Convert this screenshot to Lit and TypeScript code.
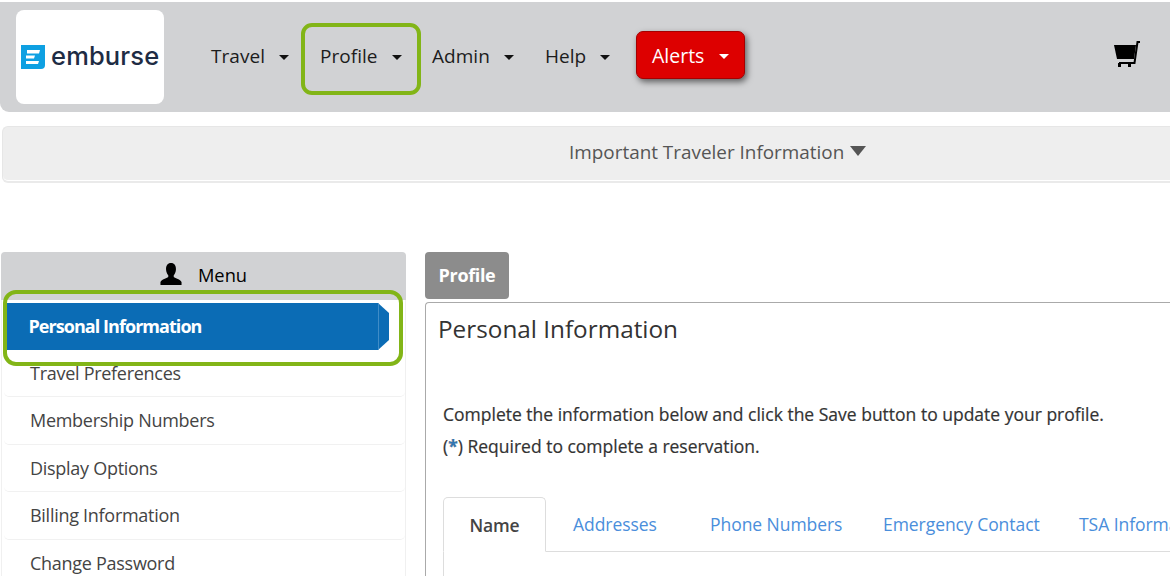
import { LitElement, html, css } from "lit";
import { customElement } from "lit/decorators.js";

const nav = [
  { label: "Travel", cls: "travel" },
  { label: "Profile", cls: "profile" },
  { label: "Admin", cls: "admin" },
  { label: "Help", cls: "help" },
];
const menu = ["Travel Preferences", "Membership Numbers", "Display Options", "Billing Information", "Change Password"];
const tabs = [
  { label: "Addresses", w: 137 },
  { label: "Phone Numbers", w: 173 },
  { label: "Emergency Contact", w: 196 },
  { label: "TSA Information", w: 200 },
];

@customElement("app-root")
export class AppRoot extends LitElement {
  static styles = css`
    :host {
      display: block;
      position: relative;
      width: 1170px;
      height: 576px;
      overflow: hidden;
      background: #fff;
      font-family: "Open Sans", "Noto Sans", sans-serif;
      color: #333;
    }
    .header {
      margin-top: 2px;
      height: 110px;
      box-sizing: border-box;
      background: #d1d2d4;
      border-bottom-left-radius: 9px;
      display: flex;
      align-items: flex-start;
      padding: 8px 30px 0 16px;
    }
    .logo {
      width: 148px;
      height: 94px;
      flex: none;
      background: #fff;
      border-radius: 8px;
      box-sizing: border-box;
      padding-left: 5px;
      display: flex;
      align-items: center;
      gap: 6px;
    }
    .logo svg { display: block; flex: none; margin-top: -1px; }
    .wordmark {
      font-family: "Inter", "Open Sans", sans-serif;
      font-size: 25.5px;
      font-weight: 500;
      letter-spacing: 0.15px;
      color: #1e2c44;
      margin-top: -3px;
    }
    .nav { display: flex; margin-left: 47px; align-items: flex-start; }
    .nav-item {
      height: 72px;
      margin-top: 13px;
      box-sizing: border-box;
      display: flex;
      align-items: center;
      padding: 0 9px 7px 16px;
      font-size: 19px;
      letter-spacing: 0.04px;
      color: #1c1c1c;
      border: 3px solid transparent;
      border-radius: 11px;
    }
    .nav-item.travel { margin-left: -22px; width: 112px; padding-left: 19px; }
    .nav-item.profile { border: 4px solid #82b517; width: 120px; padding-left: 15px; padding-bottom: 6px; }
    .nav-item.admin { width: 112px; margin-left: -8px; }
    .nav-item.help { width: 100px; margin-left: 1px; }
    .caret {
      flex: none;
      width: 0;
      height: 0;
      margin-left: 14px;
      margin-top: 3px;
      border-left: 5.5px solid transparent;
      border-right: 5.5px solid transparent;
      border-top: 5px solid #111;
    }
    .alerts {
      margin-top: 21px;
      margin-left: 10px;
      width: 109px;
      height: 48px;
      box-sizing: border-box;
      padding: 0 0 0 15px;
      display: flex;
      align-items: center;
      color: #fff;
      font-size: 19.5px;
      background: #dd0000;
      border: 1px solid #a50000;
      border-radius: 7px;
      box-shadow: 2px 3px 6px rgba(0, 0, 0, 0.55);
    }
    .alerts .caret { border-top-color: #fff; margin-left: 15px; }
    .cart { margin-left: auto; margin-top: 31px; flex: none; display: block; }
    .info {
      margin: 14px 0 0 2px;
      height: 57px;
      box-sizing: border-box;
      background: #eeeeee;
      border: 1px solid #e6e6e6;
      border-right: none;
      border-bottom: 2px solid #eaeaea;
      box-shadow: inset 0 -1px 0 #fff;
      border-radius: 6px 0 0 6px;
      display: flex;
      align-items: center;
      padding: 0 0 4px 566px;
      font-size: 18.9px;
      color: #555;
    }
    .info i {
      width: 0;
      height: 0;
      margin: -3px 0 0 6px;
      border-left: 8.5px solid transparent;
      border-right: 8.5px solid transparent;
      border-top: 10px solid #555;
    }
    .main { display: flex; margin-top: 69px; padding-left: 1px; align-items: flex-start; }
    .sidebar { width: 405px; flex: none; }
    .side-head {
      height: 48px;
      box-sizing: border-box;
      background: #d1d2d4;
      border-radius: 4px 4px 0 0;
      display: flex;
      align-items: center;
      justify-content: center;
      gap: 16px;
      padding-bottom: 4px;
      font-size: 18.3px;
      color: #000;
    }
    .side-head svg { margin-bottom: 1px; }
    .side-body {
      border-left: 1px solid #f0f0f0;
      border-right: 1px solid #f0f0f0;
      padding: 3px 0 0 5px;
    }
    .active {
      display: flex;
      align-items: center;
      height: 47px;
      box-sizing: border-box;
      margin: 0 16px -0.3px 0;
      padding: 0 0 2px 21.5px;
      background: #0b6cb5;
      color: #fff;
      font-weight: 700;
      font-size: 18px;
      letter-spacing: -0.95px;
      clip-path: polygon(0 0, 371px 0, 100% 10px, 100% 37px, 371px 100%, 0 100%);
      position: relative;
    }
    .active::after {
      content: "";
      position: absolute;
      top: 0;
      bottom: 0;
      left: 371px;
      width: 1px;
      background: #3f8cc7;
    }
    .item {
      height: 47.5px;
      box-sizing: border-box;
      display: flex;
      align-items: center;
      margin-left: -3px;
      padding: 0 0 0 26px;
      font-size: 18px;
      letter-spacing: -0.28px;
      color: #444;
      border-bottom: 1px solid #f1f1f1;
      border-radius: 0 0 5px 5px;
    }
    .content { flex: 1; margin-left: 19px; min-width: 0; }
    .pill {
      width: 84px;
      height: 47px;
      box-sizing: border-box;
      background: #8c8c8c;
      color: #fff;
      font-weight: 700;
      font-size: 18px;
      letter-spacing: -0.35px;
      border-radius: 4px;
      display: flex;
      align-items: center;
      padding-bottom: 1px;
      justify-content: center;
    }
    .panel {
      margin-top: 3px;
      height: 300px;
      box-sizing: border-box;
      border: 1px solid #aaa;
      border-right: none;
      border-radius: 4px 0 0 0;
      padding: 8px 0 0 12px;
    }
    h1 {
      margin: 0;
      font-size: 24.3px;
      font-weight: 400;
      line-height: 36px;
      color: #333;
    }
    .note {
      margin: 0 0 0 5px;
      font-size: 17.5px;
      font-weight: 400;
      -webkit-text-stroke: 0.2px #333;
      line-height: 32px;
      color: #333;
      white-space: nowrap;
    }
    .note.first { margin-top: 51px; }
    .note b { color: #337ab7; }
    .tabs {
      display: flex;
      margin: 35px 0 0 5px;
      height: 55px;
      box-sizing: border-box;
      border-bottom: 1px solid #ddd;
      width: 800px;
      white-space: nowrap;
    }
    .tab {
      flex: none;
      box-sizing: border-box;
      display: flex;
      align-items: center;
      padding: 0 0 0 27px;
      font-size: 17.5px;
      letter-spacing: -0.05px;
      color: #4a8edb;
    }
    .tab.on {
      width: 103px;
      height: 55px;
      padding-left: 25.5px;
      border: 1px solid #ddd;
      border-bottom: 1px solid #fff;
      border-radius: 5px 5px 0 0;
      color: #444;
      font-weight: 600;
      letter-spacing: -0.2px;
    }
    .tabpane {
      margin-left: 5px;
      height: 30px;
      border-left: 1px solid #ddd;
    }
    .mark {
      position: absolute;
      left: 3px;
      top: 290px;
      width: 400px;
      height: 76px;
      box-sizing: border-box;
      border: 4px solid #82b517;
      border-radius: 13px;
      pointer-events: none;
    }
  `;

  render() {
    return html`
      <div class="header">
        <div class="logo">
          <svg width="24" height="24" viewBox="0 0 24 24" aria-hidden="true">
            <path d="M0 0H24V20Q24 24 20 24H0Z" fill="#0ea0e2" />
            <path d="M6 5H19L18 8.5H6Z M5 10.5H14L13 13.5H5Z M5 16H18L17 19H5Z" fill="#fff" />
          </svg>
          <span class="wordmark">emburse</span>
        </div>
        <div class="nav">
          ${nav.map(
            (n) => html`<div class="nav-item ${n.cls}">${n.label}<span class="caret"></span></div>`
          )}
          <div class="alerts">Alerts<span class="caret"></span></div>
        </div>
        <svg class="cart" width="26" height="27" viewBox="0 0 26 27" aria-hidden="true">
          <path d="M0 4H22L20 18H3Z" fill="#000" />
          <path d="M26 1H23.5L20.5 22H5" fill="none" stroke="#000" stroke-width="2" />
          <rect x="4" y="22" width="3" height="4" fill="#000" />
          <rect x="14" y="22" width="3" height="4" fill="#000" />
        </svg>
      </div>
      <div class="info">Important Traveler Information<i></i></div>
      <div class="main">
        <div class="sidebar">
          <div class="side-head">
            <svg width="22" height="22" viewBox="0 0 24 22" preserveAspectRatio="none" aria-hidden="true">
              <path d="M12 0C15.6 0 17.6 2.6 17.4 6.5C17.3 9 16.2 11 15 12.2V14C17 15.4 22 16.2 23.5 19V22H0.5V19C2 16.2 7 15.4 9 14V12.2C7.8 11 6.7 9 6.6 6.5C6.4 2.6 8.4 0 12 0Z" fill="#000" />
            </svg>
            <span>Menu</span>
          </div>
          <div class="side-body">
            <div class="active">Personal Information</div>
            ${menu.map((m) => html`<div class="item">${m}</div>`)}
          </div>
        </div>
        <div class="content">
          <div class="pill">Profile</div>
          <div class="panel">
            <h1>Personal Information</h1>
            <p class="note first">Complete the information below and click the Save button to update your profile.</p>
            <p class="note">(<b>*</b>) Required to complete a reservation.</p>
            <div class="tabs">
              <div class="tab on">Name</div>
              ${tabs.map((t) => html`<div class="tab" style="width:${t.w}px">${t.label}</div>`)}
            </div>
            <div class="tabpane"></div>
          </div>
        </div>
      </div>
      <div class="mark"></div>
    `;
  }
}
